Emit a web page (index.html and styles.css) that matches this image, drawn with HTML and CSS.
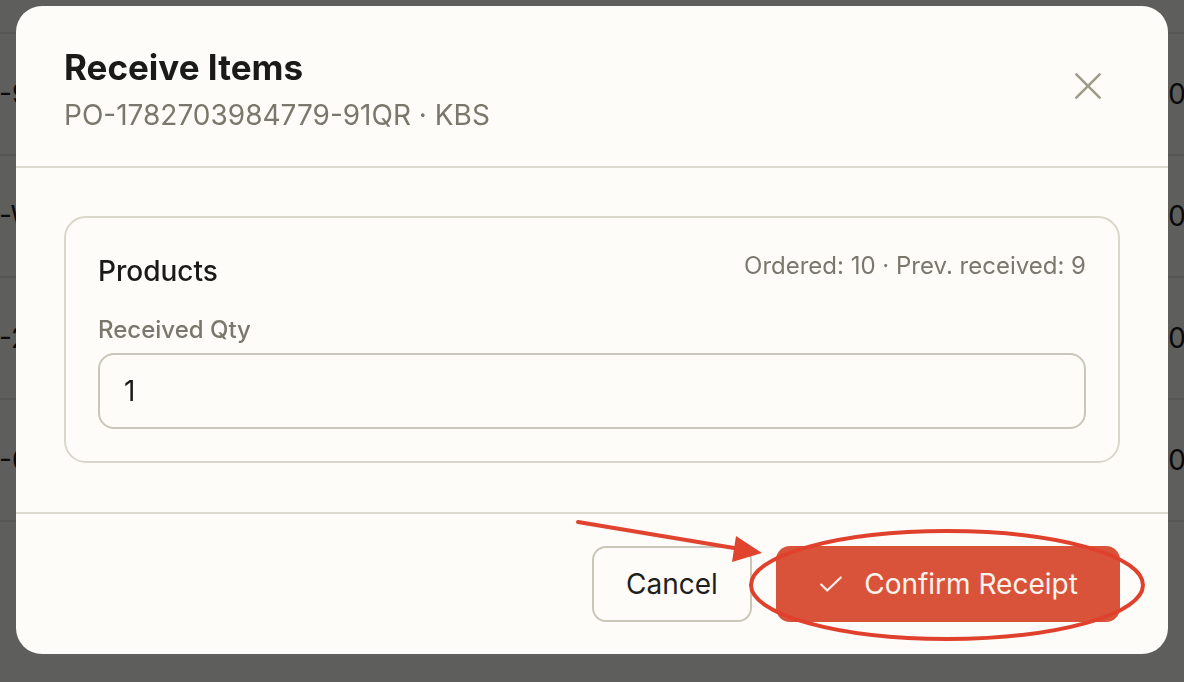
FILE: index.html
```html
<!DOCTYPE html>
<html lang="en">
  <head>
    <meta charset="UTF-8" />
    <title>Receive Items</title>
    <link rel="stylesheet" href="styles.css">
  </head>
  <body>
    <!-- page behind the dialog -->
    <div class="table-page">
      <div class="table-head"></div>
      <div class="table-row"><span class="cell-left">-9</span><span class="cell-right">0</span></div>
      <div class="table-row"><span class="cell-left">-W</span><span class="cell-right">0</span></div>
      <div class="table-row"><span class="cell-left">-2</span><span class="cell-right">0</span></div>
      <div class="table-row"><span class="cell-left">-0</span><span class="cell-right">0</span></div>
    </div>

    <div class="backdrop">
      <div class="modal">
        <div class="modal-header">
          <div class="header-text">
            <h1 class="modal-title">Receive Items</h1>
            <p class="modal-subtitle">PO-1782703984779-91QR · KBS</p>
          </div>
          <button class="close-button" aria-label="Close">
            <svg width="28" height="28" viewBox="0 0 24 24" fill="none" stroke="currentColor" stroke-width="2.2" stroke-linecap="round">
              <path d="M2 2l20 20M22 2L2 22" />
            </svg>
          </button>
        </div>

        <div class="modal-body">
          <div class="product-card">
            <div class="product-top">
              <span class="product-name">Products</span>
              <span class="product-meta">Ordered: 10 · Prev. received: 9</span>
            </div>
            <label class="field-label" for="received-qty">Received Qty</label>
            <input class="qty-input" id="received-qty" type="text" value="1" />
          </div>
        </div>

        <div class="modal-footer">
          <button class="cancel-button">Cancel</button>
          <button class="confirm-button">
            <svg width="26" height="26" viewBox="0 0 24 24" fill="none" stroke="currentColor" stroke-width="2" stroke-linecap="round" stroke-linejoin="round">
              <path d="M3 12.5l5.5 5.5L21 6" />
            </svg>
            Confirm Receipt
          </button>
        </div>
      </div>
    </div>

    <!-- red annotation drawn over the screenshot -->
    <svg class="annotation" width="1184" height="682" viewBox="0 0 1184 682">
      <line x1="578" y1="522" x2="740" y2="549" stroke="#e0432e" stroke-width="4" stroke-linecap="round" />
      <polygon points="762,553 736,536 732,562" fill="#e0432e" />
      <ellipse cx="947" cy="585" rx="196" ry="54" fill="none" stroke="#e0412c" stroke-width="4" />
    </svg>
  </body>
</html>
```

FILE: styles.css
```css
body {
  margin: 0;
  width: 1184px;
  height: 682px;
  overflow: hidden;
  font-family: Inter, "Noto Sans", sans-serif;
  background-color: #f2f1ec;
}

.table-page {
  width: 1184px;
}

.table-head {
  height: 32px;
  border-bottom: 2px solid #e0ded5;
}

.table-row {
  height: 120px;
  border-bottom: 2px solid #e0ded5;
  display: flex;
  justify-content: space-between;
  align-items: center;
  font-size: 28px;
  color: #1b1b1b;
}

.cell-left {
  margin-left: -1px;
}

.cell-right {
  margin-right: -2px;
}

.backdrop {
  position: fixed;
  inset: 0;
  background-color: rgba(0, 0, 0, 0.61);
  display: flex;
  justify-content: center;
  align-items: flex-start;
  padding-top: 6px;
}

.modal {
  width: 1152px;
  height: 648px;
  background-color: #fdfcf8;
  border-radius: 26px;
  display: flex;
  flex-direction: column;
  overflow: hidden;
}

.modal-header {
  height: 160px;
  padding: 0 48px;
  display: flex;
  justify-content: space-between;
  align-items: center;
  border-bottom: 2px solid #dcdad0;
}

.header-text {
  margin-top: 5px;
}

.modal-title {
  margin: 0;
  font-size: 35px;
  font-weight: 700;
  color: #1a1a18;
  line-height: 42px;
}

.modal-subtitle {
  margin: 10px 0 0 0;
  font-size: 28px;
  color: #7a776d;
  line-height: 34px;
}

.close-button {
  background: none;
  border: none;
  padding: 0;
  color: #9d9b8a;
  cursor: pointer;
  display: flex;
  margin-right: 18px;
}

.modal-body {
  padding: 48px 48px 49px 48px;
  border-bottom: 2px solid #dcdad0;
}

.product-card {
  border: 2px solid #d9d7cb;
  border-radius: 22px;
  padding: 34px 32px 32px 32px;
  display: flex;
  flex-direction: column;
}

.product-top {
  display: flex;
  justify-content: space-between;
  align-items: center;
  height: 34px;
  margin-bottom: 29px;
}

.product-name {
  font-size: 28px;
  font-weight: 500;
  color: #1a1a18;
  margin-top: 3px;
}

.product-meta {
  font-size: 24px;
  color: #7a776d;
  margin-top: -8px;
}

.field-label {
  font-size: 24px;
  font-weight: 500;
  color: #7a776d;
  line-height: 29px;
  margin-bottom: 9px;
}

.qty-input {
  height: 76px;
  box-sizing: border-box;
  border: 2px solid #c9c7ba;
  border-radius: 16px;
  background-color: #fdfcf8;
  padding: 0 24px;
  font-family: Inter, "Noto Sans", sans-serif;
  font-size: 28px;
  color: #1a1a18;
}

.modal-footer {
  flex: 1;
  display: flex;
  justify-content: flex-end;
  align-items: center;
  gap: 24px;
  padding: 0 48px;
}

.cancel-button {
  width: 160px;
  height: 76px;
  background-color: #fdfcf8;
  border: 2px solid #c9c7ba;
  border-radius: 14px;
  font-family: Inter, "Noto Sans", sans-serif;
  font-size: 28px;
  font-weight: 400;
  color: #1f1f1d;
  cursor: pointer;
}

.confirm-button {
  width: 344px;
  height: 76px;
  background-color: #d9533a;
  border: none;
  border-radius: 14px;
  font-family: Inter, "Noto Sans", sans-serif;
  font-size: 28px;
  font-weight: 400;
  color: #fdf3ee;
  display: flex;
  justify-content: center;
  align-items: center;
  gap: 20px;
  cursor: pointer;
}

.annotation {
  position: fixed;
  top: 0;
  left: 0;
  pointer-events: none;
}
```
